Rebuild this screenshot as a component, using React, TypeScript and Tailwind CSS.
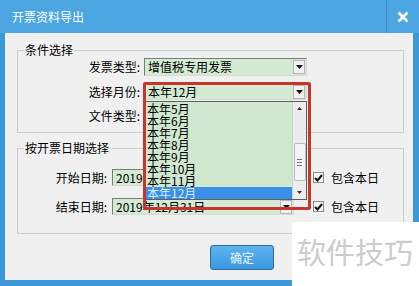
import React from 'react';

const months = ['本年5月', '本年6月', '本年7月', '本年8月', '本年9月', '本年10月', '本年11月', '本年12月'];

const DropArrow: React.FC = () => (
  <div className="w-[12px] h-[14px] mr-[1px] shrink-0 bg-[#f0f0f0] border border-[#b5b5b5] flex items-center justify-center">
    <svg width="7" height="4" viewBox="0 0 7 4"><path d="M0 0h7L3.5 4z" fill="#111" /></svg>
  </div>
);

const Combo: React.FC<{ value: string; w: string; h: string }> = ({ value, w, h }) => (
  <div className={`${w} ${h} bg-[#d3ead3] border border-t-[#7c7c7c] border-l-[#7c7c7c] border-r-[#d8d8d8] border-b-[#d8d8d8] flex items-center`}>
    <span className="pl-[3px] flex-1 text-[12px] leading-[14px] text-black whitespace-nowrap">{value}</span>
    <DropArrow />
  </div>
);

const Check: React.FC = () => (
  <div className="flex items-center ml-[19px]">
    <div className="w-[11px] h-[11px] border border-[#8a8a8a] bg-[#f4f4f4] flex items-center justify-center">
      <svg width="9" height="8" viewBox="0 0 9 8"><path d="M1 4l2.5 2.5L8 1" stroke="#111" strokeWidth="2" fill="none" /></svg>
    </div>
    <span className="ml-[7px] text-[12px] leading-[14px] text-black">包含本日</span>
  </div>
);

export default function App() {
  return (
    <div className="w-[419px] h-[286px] relative overflow-hidden bg-[#3d98d8] font-['Noto_Sans_CJK_SC','Noto_Sans',sans-serif] leading-[14px]">
      {/* title bar */}
      <div className="h-[33px] flex items-center bg-[#4ba6e2]">
        <span className="ml-[12px] text-white text-[12px]">开票资料导出</span>
        <div className="ml-auto w-px h-full bg-[#3a8ccc]" />
        <div className="w-[32px] flex justify-center">
          <svg width="12" height="12" viewBox="0 0 12 12"><path d="M1.5 1.5l9 9M10.5 1.5l-9 9" stroke="#fff" strokeWidth="2.6" /></svg>
        </div>
      </div>

      {/* client area */}
      <div className="ml-[5px] w-[408px] h-[247px] bg-[#f0f0f0] pt-[17px] pl-[12px]">
        <div className="w-[387px] h-[83px] border border-[#cdcdcd] relative">
          <span className="absolute left-[6px] -top-[8px] px-[1px] bg-[#f0f0f0] text-[12px] text-black">条件选择</span>
          <div className="pt-[7px] flex flex-col gap-[7px]">
            <div className="flex items-center">
              <span className="w-[126px] pr-[4px] text-right text-[12px] text-black">发票类型:</span>
              <Combo value="增值税专用发票" w="w-[163px]" h="h-[18px]" />
            </div>
            <div className="flex items-center">
              <span className="w-[126px] pr-[4px] text-right text-[12px] text-black">选择月份:</span>
              <Combo value="本年12月" w="w-[163px]" h="h-[17px]" />
            </div>
            <div className="flex items-center">
              <span className="w-[126px] pr-[4px] text-right text-[12px] text-black">文件类型:</span>
              <Combo value="" w="w-[163px]" h="h-[17px]" />
            </div>
          </div>
        </div>

        <div className="mt-[15px] w-[387px] h-[86px] border border-[#cdcdcd] relative">
          <span className="absolute left-[6px] -top-[8px] px-[1px] bg-[#f0f0f0] text-[12px] text-black">按开票日期选择</span>
          <div className="pt-[20px] flex flex-col gap-[12px]">
            <div className="flex items-center">
              <span className="w-[94px] pr-[5px] text-right text-[12px] text-black">开始日期:</span>
              <Combo value="2019年" w="w-[182px]" h="h-[17px]" />
              <Check />
            </div>
            <div className="flex items-center">
              <span className="w-[94px] pr-[5px] text-right text-[12px] text-black">结束日期:</span>
              <Combo value="2019年12月31日" w="w-[182px]" h="h-[17px]" />
              <Check />
            </div>
          </div>
        </div>

        <div className="mt-[11px] pl-[193px]">
          <button className="w-[64px] h-[25px] rounded-[3px] border border-[#2a6aa3] bg-gradient-to-b from-[#5db3ee] to-[#3c98e0] text-[12px] text-[#eaf5ff] flex items-center justify-center">
            确定
          </button>
        </div>
      </div>

      {/* open dropdown list */}
      <div className="absolute left-[145px] top-[101px] w-[162px] h-[99px] bg-[#cfe8cf] border border-[#5e5e5e] flex">
        <div className="flex-1 pt-[1px]">
          {months.map((m, i) => (
            <div
              key={m}
              className={`h-[12px] pl-[1px] flex items-center text-[12px] leading-[12px] ${i === months.length - 1 ? 'bg-[#3b8fe6] text-[#d8ecff]' : 'text-black'}`}
            >
              {m}
            </div>
          ))}
        </div>
        <div className="w-[14px] h-full bg-[#ececec] border-l border-[#d0d0d0] flex flex-col items-center">
          <svg className="mt-[5px]" width="5" height="3" viewBox="0 0 5 3"><path d="M0 3h5L2.5 0z" fill="#333" /></svg>
          <div className="mt-[33px] w-[12px] h-[38px] bg-[#f4f4f4] border border-[#bdbdbd] rounded-[2px] flex flex-col items-center justify-center gap-[2px]">
            <div className="w-[5px] h-px bg-[#777]" />
            <div className="w-[5px] h-px bg-[#777]" />
            <div className="w-[5px] h-px bg-[#777]" />
          </div>
          <svg className="mt-[10px]" width="5" height="3" viewBox="0 0 5 3"><path d="M0 0h5L2.5 3z" fill="#333" /></svg>
        </div>
      </div>

      {/* red highlight */}
      <div className="absolute left-[143px] top-[82px] w-[168px] h-[128px] border-[3px] border-[#c7362d] rounded-[2px]" />

      {/* watermark */}
      <div className="absolute left-[292px] top-[222px] w-[127px] h-[64px] bg-white pl-[5px] pt-[11px]">
        <span className="text-[29px] leading-[36px] text-[#cccccc] whitespace-nowrap">软件技巧</span>
      </div>
    </div>
  );
}
